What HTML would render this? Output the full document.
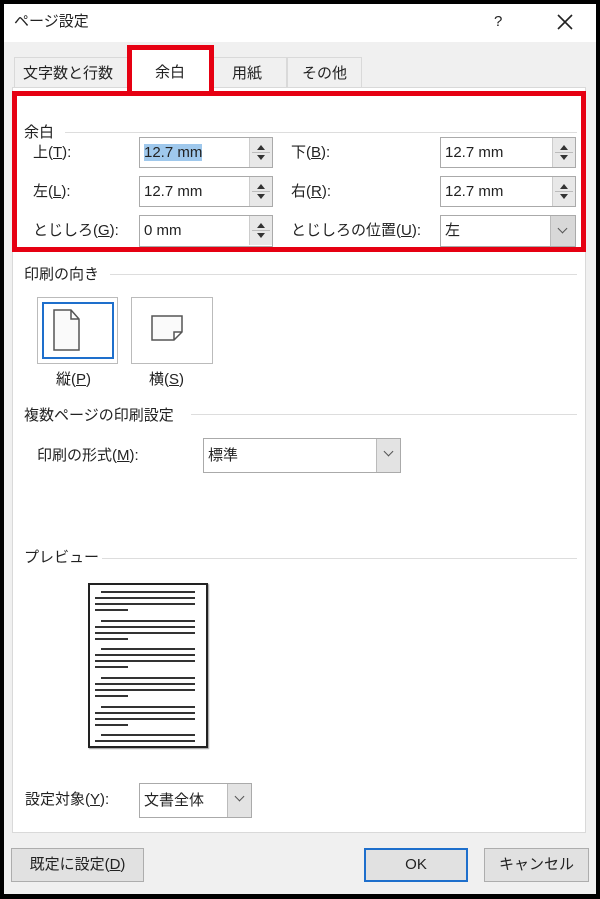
<!DOCTYPE html>
<html><head><meta charset="utf-8"><style>
*{margin:0;padding:0;box-sizing:border-box}
body{width:600px;height:899px;background:#000;position:relative;overflow:hidden;font-family:"Liberation Sans","Noto Sans CJK JP",sans-serif;font-size:15px;color:#222}
.a{position:absolute}
.t{position:absolute;white-space:nowrap;line-height:20px}
.line{position:absolute;height:1px;background:#ddd}
.inp{position:absolute;background:#fff;border:1px solid #aaa;height:31px}
.inp span{position:absolute;left:4px;top:5px;line-height:20px;white-space:nowrap}
.spin{position:absolute;right:0;top:0;width:23px;height:29px;background:#e8e8e8;border-left:1px solid #ccc}
.spin i{position:absolute;left:7px;width:0;height:0;border-left:4px solid transparent;border-right:4px solid transparent}
.spin .u{top:7px;border-bottom:5px solid #333}
.spin .d{top:17px;border-top:5px solid #333}
.spin b{position:absolute;left:2px;right:2px;top:14px;height:1px;background:#bbb}
.dd{position:absolute;right:0;top:0;bottom:0;width:24px;background:#e3e3e3;border-left:1px solid #bbb}
.dd:after{content:"";position:absolute;left:8px;top:9px;width:6px;height:6px;border-right:1.5px solid #555;border-bottom:1.5px solid #555;transform:rotate(45deg)}
.btn{position:absolute;background:#e1e1e1;border:1px solid #adadad;height:34px;text-align:center;line-height:32px}
u{text-decoration:underline}
.pl{position:absolute;height:2px;background:#333}
</style></head><body>
<div class="a" style="left:4px;top:4px;width:592px;height:890px;background:#f0f0f0"></div>
<div class="a" style="left:4px;top:4px;width:592px;height:38px;background:#fff"></div>
<div class="t" style="left:14px;top:12px">ページ設定</div>
<div class="t" style="left:494px;top:12px">?</div>
<svg class="a" style="left:556px;top:13px" width="18" height="18"><path d="M2 2L16 16M16 2L2 16" stroke="#222" stroke-width="1.6"/></svg>
<!-- tabs -->
<div class="a" style="left:14px;top:57px;width:114px;height:31px;border:1px solid #d9d9d9;border-bottom:none;background:#f0f0f0"></div>
<div class="t" style="left:23px;top:64px">文字数と行数</div>
<div class="a" style="left:213px;top:57px;width:74px;height:31px;border:1px solid #d9d9d9;border-bottom:none"></div>
<div class="t" style="left:232px;top:64px">用紙</div>
<div class="a" style="left:287px;top:57px;width:75px;height:31px;border:1px solid #d9d9d9;border-bottom:none"></div>
<div class="t" style="left:302px;top:64px">その他</div>
<!-- panel -->
<div class="a" style="left:12px;top:87px;width:574px;height:746px;background:#fff;border:1px solid #d9d9d9"></div>
<div class="a" style="left:127px;top:45px;width:87px;height:46px;background:#fff;border:5px solid #e60012;border-bottom:none"></div>
<div class="t" style="left:155px;top:63px">余白</div>
<div class="a" style="left:12px;top:91px;width:574px;height:161px;border:5px solid #e60012"></div>
<div class="t" style="left:24px;top:123px">余白</div>
<div class="line" style="left:65px;top:132px;width:512px"></div>
<div class="t" style="left:33px;top:143px">上(<u>T</u>):</div>
<div class="inp" style="left:139px;top:137px;width:134px"><span><span style="position:static;background:#9fc8ec">12.7 mm</span></span><div class="spin"><i class="u"></i><b></b><i class="d"></i></div></div>
<div class="t" style="left:291px;top:143px">下(<u>B</u>):</div>
<div class="inp" style="left:440px;top:137px;width:136px"><span>12.7 mm</span><div class="spin"><i class="u"></i><b></b><i class="d"></i></div></div>
<div class="t" style="left:33px;top:182px">左(<u>L</u>):</div>
<div class="inp" style="left:139px;top:176px;width:134px"><span>12.7 mm</span><div class="spin"><i class="u"></i><b></b><i class="d"></i></div></div>
<div class="t" style="left:291px;top:182px">右(<u>R</u>):</div>
<div class="inp" style="left:440px;top:176px;width:136px"><span>12.7 mm</span><div class="spin"><i class="u"></i><b></b><i class="d"></i></div></div>
<div class="t" style="left:33px;top:221px">とじしろ(<u>G</u>):</div>
<div class="inp" style="left:139px;top:215px;width:134px;height:32px"><span>0 mm</span><div class="spin"><i class="u"></i><b></b><i class="d"></i></div></div>
<div class="t" style="left:291px;top:221px">とじしろの位置(<u>U</u>):</div>
<div class="inp" style="left:440px;top:215px;width:136px;height:32px;background:#fff"><span>左</span><div class="dd" style="width:25px;background:#d8d8d8"></div></div>
<div class="a" style="left:12px;top:247px;width:574px;height:5px;background:#e60012"></div>
<!-- orientation -->
<div class="t" style="left:24px;top:265px">印刷の向き</div>
<div class="line" style="left:110px;top:274px;width:467px"></div>
<div class="a" style="left:37px;top:297px;width:81px;height:67px;border:1px solid #bbb;background:#fff"></div>
<div class="a" style="left:42px;top:302px;width:72px;height:57px;border:2px solid #1e6fcc"></div>
<svg class="a" style="left:50px;top:305px" width="34" height="50"><path d="M4 5H21L29 14V45H4Z M21 5V14H29" fill="#fafafa" stroke="#555" stroke-width="1.5"/></svg>
<div class="a" style="left:131px;top:297px;width:82px;height:67px;border:1px solid #bbb;background:#fff"></div>
<svg class="a" style="left:145px;top:310px" width="60" height="40"><path d="M7 6H37V22L29 30H7Z M37 22H29V30" fill="#fafafa" stroke="#555" stroke-width="1.5"/></svg>
<div class="t" style="left:56px;top:370px">縦(<u>P</u>)</div>
<div class="t" style="left:149px;top:370px">横(<u>S</u>)</div>
<div class="t" style="left:24px;top:406px">複数ページの印刷設定</div>
<div class="line" style="left:191px;top:414px;width:386px"></div>
<div class="t" style="left:37px;top:446px">印刷の形式(<u>M</u>):</div>
<div class="inp" style="left:203px;top:438px;width:198px;height:35px"><span style="top:7px">標準</span><div class="dd"></div></div>
<div class="t" style="left:24px;top:548px">プレビュー</div>
<div class="line" style="left:102px;top:558px;width:475px"></div>
<div class="a" style="left:88px;top:583px;width:120px;height:165px;border:2px solid #222;background:#fff;box-shadow:1px 1px 1px #999"></div>
<div class="a" style="left:88px;top:583px">
<div class="pl" style="left:13px;top:8px;width:94px"></div><div class="pl" style="left:7px;top:14px;width:100px"></div><div class="pl" style="left:7px;top:20px;width:100px"></div><div class="pl" style="left:7px;top:26px;width:33px"></div>
<div class="pl" style="left:13px;top:37px;width:94px"></div><div class="pl" style="left:7px;top:43px;width:100px"></div><div class="pl" style="left:7px;top:49px;width:100px"></div><div class="pl" style="left:7px;top:55px;width:33px"></div>
<div class="pl" style="left:13px;top:65px;width:94px"></div><div class="pl" style="left:7px;top:71px;width:100px"></div><div class="pl" style="left:7px;top:77px;width:100px"></div><div class="pl" style="left:7px;top:83px;width:33px"></div>
<div class="pl" style="left:13px;top:94px;width:94px"></div><div class="pl" style="left:7px;top:100px;width:100px"></div><div class="pl" style="left:7px;top:106px;width:100px"></div><div class="pl" style="left:7px;top:112px;width:33px"></div>
<div class="pl" style="left:13px;top:123px;width:94px"></div><div class="pl" style="left:7px;top:129px;width:100px"></div><div class="pl" style="left:7px;top:135px;width:100px"></div><div class="pl" style="left:7px;top:141px;width:33px"></div>
<div class="pl" style="left:13px;top:151px;width:94px"></div><div class="pl" style="left:7px;top:157px;width:100px"></div>
</div>
<div class="t" style="left:25px;top:790px">設定対象(<u>Y</u>):</div>
<div class="inp" style="left:139px;top:783px;width:113px;height:35px"><span style="top:7px">文書全体</span><div class="dd"></div></div>
<!-- buttons -->
<div class="btn" style="left:11px;top:848px;width:133px">既定に設定(<u>D</u>)</div>
<div class="btn" style="left:364px;top:848px;width:104px;border:2px solid #1e6fcc;line-height:30px">OK</div>
<div class="btn" style="left:484px;top:848px;width:105px">キャンセル</div>
</body></html>
